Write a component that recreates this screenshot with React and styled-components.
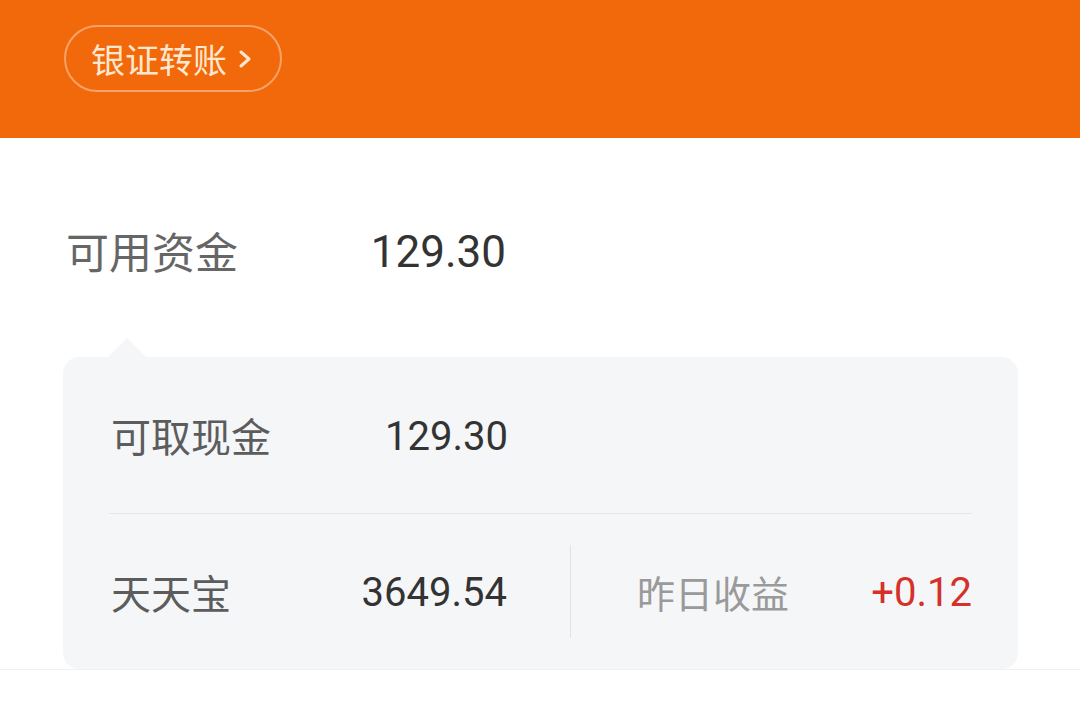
import styled, { createGlobalStyle } from 'styled-components';

const GlobalStyle = createGlobalStyle`
  body {
    margin: 0;
    background: #fff;
    font-family: Roboto, "Noto Sans CJK SC", sans-serif;
  }
`;

const Header = styled.header`
  height: 138px;
  box-sizing: border-box;
  background: #f2690b;
  padding: 25px 0 0 64px;
`;

const TransferButton = styled.button`
  display: flex;
  align-items: center;
  gap: 9px;
  height: 67px;
  box-sizing: border-box;
  padding: 0 26px 0 25px;
  border: 2px solid rgba(255, 255, 255, 0.38);
  border-radius: 34px;
  background: transparent;
  color: #ffe8cf;
  font-family: "Noto Sans CJK SC", sans-serif;
  font-size: 34px;
  line-height: 1;

  svg {
    width: 18px;
    height: 22px;
  }
`;

const Funds = styled.section`
  border-bottom: 1px solid #f1f1f1;
`;

const TopRow = styled.div`
  display: flex;
  align-items: center;
  justify-content: space-between;
  width: 440px;
  height: 200px;
  box-sizing: border-box;
  padding-top: 24px;
  margin-left: 66px;
`;

const Label = styled.span`
  font-family: "Noto Sans CJK SC", sans-serif;
  font-size: ${({ size }) => size || 40}px;
  color: ${({ muted }) => (muted ? '#9a9a9a' : '#5c5c5c')};
  line-height: 1;
`;

const Amount = styled.span`
  font-family: Roboto, sans-serif;
  font-size: ${({ size }) => size || 40}px;
  color: ${({ red }) => (red ? '#d6302b' : '#333')};
  line-height: 1;
  padding-top: 3px;
`;

const Card = styled.div`
  position: relative;
  width: 955px;
  margin: 19px 0 0 63px;
  box-sizing: border-box;
  padding: 0 46px;
  background: #f5f6f8;
  border-radius: 16px;

  &::before {
    content: '';
    position: absolute;
    left: 45px;
    top: -19px;
    border-left: 19px solid transparent;
    border-right: 19px solid transparent;
    border-bottom: 19px solid #f5f6f8;
  }
`;

const CardRow = styled.div`
  display: flex;
  align-items: center;
  height: ${({ h }) => h}px;
  border-bottom: ${({ divided }) => (divided ? '1px solid #e6e7e9' : 'none')};
`;

const Pair = styled.div`
  display: flex;
  align-items: center;
  justify-content: space-between;
  width: ${({ w }) => w}px;
  padding-left: 2px;
`;

const VLine = styled.div`
  width: 1px;
  height: 93px;
  background: #e2e3e5;
  margin: 0 64px 0 63px;
`;

const Chevron = () => (
  <svg viewBox="0 0 18 22" fill="none">
    <polyline points="5,4 13,11 5,18" stroke="#ffe8cf" strokeWidth="3" strokeLinecap="round" strokeLinejoin="round" />
  </svg>
);

const App = () => (
  <>
    <GlobalStyle />
    <Header>
      <TransferButton>
        银证转账
        <Chevron />
      </TransferButton>
    </Header>
    <Funds>
      <TopRow>
        <Label size={43} style={{ color: '#666' }}>可用资金</Label>
        <Amount size={44}>129.30</Amount>
      </TopRow>
      <Card>
        <CardRow h={156} divided>
          <Pair w={397}>
            <Label>可取现金</Label>
            <Amount>129.30</Amount>
          </Pair>
        </CardRow>
        <CardRow h={155}>
          <Pair w={397}>
            <Label>天天宝</Label>
            <Amount>3649.54</Amount>
          </Pair>
          <VLine />
          <Pair w={336}>
            <Label muted size={38}>昨日收益</Label>
            <Amount red>+0.12</Amount>
          </Pair>
        </CardRow>
      </Card>
    </Funds>
  </>
);

export default App;
